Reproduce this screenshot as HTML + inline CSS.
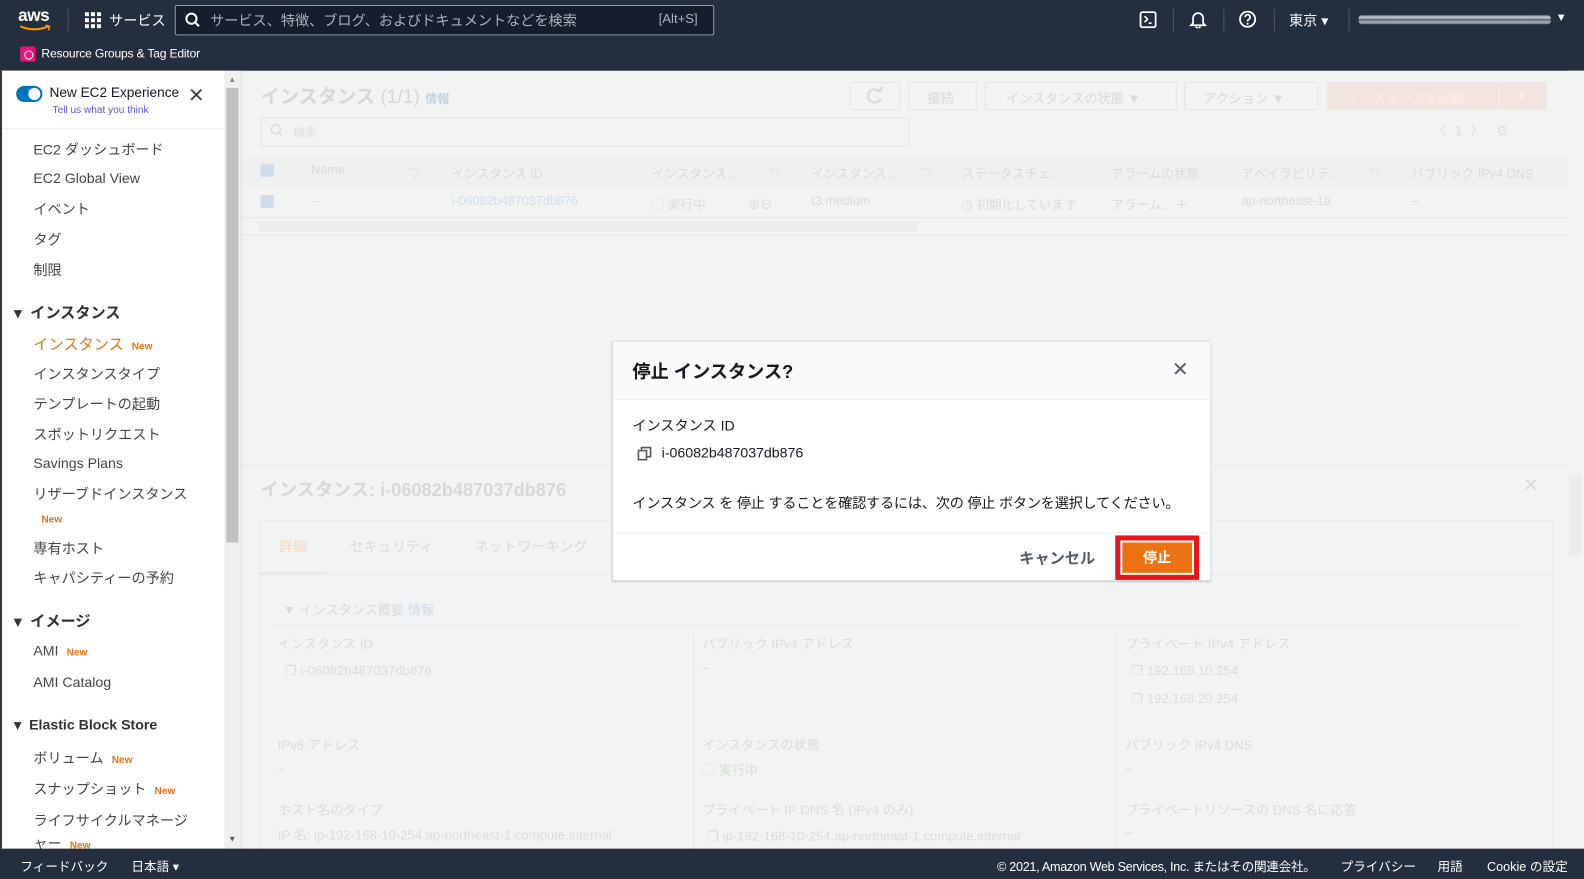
<!DOCTYPE html>
<html><head><meta charset="utf-8"><style>
html,body{margin:0;padding:0;width:1584px;height:879px;overflow:hidden;background:#f2f3f3}
#w{position:absolute;left:0;top:0;width:1568px;height:870px;transform:scale(1.0102,1.0103);transform-origin:0 0;font-family:"Liberation Sans","Noto Sans CJK JP",sans-serif;}
.a{position:absolute;white-space:nowrap}
.top{position:absolute;left:0;top:0;width:1568px;height:70px;background:#232f3e;color:#fff}
.side{position:absolute;left:0;top:70px;width:222px;height:770px;background:#fff;border-left:2px solid #333;box-sizing:border-box;font-size:14px;color:#444}
.side .a{color:#444}
.new{color:#ec7211;font-size:10px;font-weight:bold;margin-left:8px}
.foot{position:absolute;left:0;top:840px;width:1568px;height:30px;background:#232f3e;color:#fff;font-size:12.5px}
.fb{border:1px solid #e3e6e6;background:#f2f3f3;position:absolute;border-radius:2px}
.h{font-size:12.5px;color:#d8dbdc;top:161px}
.r{font-size:12.5px;color:#d8dbdc;top:192px}
.dlg{position:absolute;left:606px;top:337px;width:593px;height:238px;background:#fff;box-shadow:0 1px 2px rgba(0,0,0,.25);border:1px solid #ddd;box-sizing:border-box}
</style></head><body><div id="w">
<div class="top">
 <div class="a" style="left:18px;top:6px;font-size:17px;font-weight:bold;letter-spacing:-.5px">aws</div>
 <svg class="a" style="left:18px;top:24px" width="34" height="8"><path d="M2 2 Q16 8 30 2" stroke="#f90" stroke-width="2" fill="none"/><path d="M27 1 L31 2 L30 6" stroke="#f90" stroke-width="1.5" fill="none"/></svg>
 <div class="a" style="left:67px;top:9px;width:1px;height:22px;background:#555"></div>
 <svg class="a" style="left:84px;top:12px" width="16" height="16" fill="#fff"><rect x="0" y="0" width="4" height="4"/><rect x="6" y="0" width="4" height="4"/><rect x="12" y="0" width="4" height="4"/><rect x="0" y="6" width="4" height="4"/><rect x="6" y="6" width="4" height="4"/><rect x="12" y="6" width="4" height="4"/><rect x="0" y="12" width="4" height="4"/><rect x="6" y="12" width="4" height="4"/><rect x="12" y="12" width="4" height="4"/></svg>
 <div class="a" style="left:108px;top:10px;font-size:14px">サービス</div>
 <div class="a" style="left:173px;top:5px;width:532px;height:28px;border:1px solid #8d99a8;border-radius:2px;background:#161e2d"></div>
 <svg class="a" style="left:183px;top:12px" width="16" height="16"><circle cx="6.5" cy="6.5" r="5" stroke="#fff" stroke-width="2" fill="none"/><path d="M10 10 L14 14" stroke="#fff" stroke-width="2"/></svg>
 <div class="a" style="left:208px;top:10px;font-size:14px;color:#aab3bd">サービス、特徴、ブログ、およびドキュメントなどを検索</div>
 <div class="a" style="left:652px;top:11px;font-size:13px;color:#aab3bd">[Alt+S]</div>
 <svg class="a" style="left:1128px;top:11px" width="17" height="17"><rect x="1" y="1" width="15" height="15" rx="2" stroke="#fff" stroke-width="1.8" fill="none"/><path d="M5 5 L8 8 L5 11 M9 12 H12" stroke="#fff" stroke-width="1.6" fill="none"/></svg>
 <div class="a" style="left:1161px;top:9px;width:1px;height:22px;background:#555"></div>
 <svg class="a" style="left:1177px;top:10px" width="18" height="18"><path d="M4 13 V8 a5 5 0 0 1 10 0 V13 L16 15 H2 Z" stroke="#fff" stroke-width="1.7" fill="none"/><path d="M7 16 a2 2 0 0 0 4 0" stroke="#fff" stroke-width="1.6" fill="none"/></svg>
 <div class="a" style="left:1211px;top:9px;width:1px;height:22px;background:#555"></div>
 <svg class="a" style="left:1226px;top:10px" width="18" height="18"><circle cx="9" cy="9" r="7.5" stroke="#fff" stroke-width="1.8" fill="none"/><path d="M6.5 7 a2.5 2.5 0 1 1 3.5 2.3 c-1 .5 -1 1 -1 2" stroke="#fff" stroke-width="1.7" fill="none"/><circle cx="9" cy="13.5" r="1" fill="#fff"/></svg>
 <div class="a" style="left:1261px;top:9px;width:1px;height:22px;background:#555"></div>
 <div class="a" style="left:1276px;top:10px;font-size:14px">東京 ▾</div>
 <div class="a" style="left:1335px;top:9px;width:1px;height:22px;background:#555"></div>
 <div class="a" style="left:1345px;top:15px;width:190px;height:9px;background:linear-gradient(#6b7583,#cfd4d9,#5b6573,#aab2bb,#6b7583);border-radius:3px"></div>
 <div class="a" style="left:1540px;top:12px;font-size:11px">▼</div>
 <div class="a" style="left:20px;top:46px;width:15px;height:15px;background:#e7157b;border-radius:2px"></div>
 <div class="a" style="left:24px;top:50px;width:7px;height:7px;border:1px solid #fff;border-radius:50%"></div>
 <div class="a" style="left:41px;top:46px;font-size:12px;letter-spacing:-.2px">Resource Groups &amp; Tag Editor</div>
</div>

<div class="side">
 <div class="a" style="left:14px;top:15px;width:26px;height:16px;border-radius:8px;background:#0073bb"></div>
 <div class="a" style="left:26px;top:17px;width:12px;height:12px;border-radius:50%;background:#fff"></div>
 <div class="a" style="left:47px;top:14px;font-size:13.5px;color:#16191f">New EC2 Experience</div>
 <div class="a" style="left:50px;top:34px;font-size:10px;color:#5a54d1">Tell us what you think</div>
 <div class="a" style="left:184px;top:12px;font-size:20px;color:#444">✕</div>
 <div class="a" style="left:0;top:57px;width:222px;height:1px;background:#eaeded"></div>
 <div class="a" style="left:31px;top:68px">EC2 ダッシュボード</div>
 <div class="a" style="left:31px;top:98px">EC2 Global View</div>
 <div class="a" style="left:31px;top:127px">イベント</div>
 <div class="a" style="left:31px;top:157px">タグ</div>
 <div class="a" style="left:31px;top:187px">制限</div>
 <div class="a" style="left:12px;top:229px;font-size:15px;font-weight:bold;color:#333">▾ &nbsp;インスタンス</div>
 <div class="a" style="left:31px;top:260px;color:#ec7211;font-size:15px">インスタンス<span class="new">New</span></div>
 <div class="a" style="left:31px;top:290px">インスタンスタイプ</div>
 <div class="a" style="left:31px;top:320px">テンプレートの起動</div>
 <div class="a" style="left:31px;top:350px">スポットリクエスト</div>
 <div class="a" style="left:31px;top:380px">Savings Plans</div>
 <div class="a" style="left:31px;top:409px">リザーブドインスタンス</div>
 <div class="a" style="left:31px;top:434px"><span class="new" style="margin-left:8px">New</span></div>
 <div class="a" style="left:31px;top:463px">専有ホスト</div>
 <div class="a" style="left:31px;top:492px">キャパシティーの予約</div>
 <div class="a" style="left:12px;top:534px;font-size:15px;font-weight:bold;color:#333">▾ &nbsp;イメージ</div>
 <div class="a" style="left:31px;top:566px">AMI<span class="new">New</span></div>
 <div class="a" style="left:31px;top:597px">AMI Catalog</div>
 <div class="a" style="left:12px;top:639px;font-size:14px;font-weight:bold;color:#333">▾ &nbsp;Elastic Block Store</div>
 <div class="a" style="left:31px;top:670px">ボリューム<span class="new">New</span></div>
 <div class="a" style="left:31px;top:701px">スナップショット<span class="new">New</span></div>
 <div class="a" style="left:31px;top:732px">ライフサイクルマネージ</div>
 <div class="a" style="left:31px;top:755px">ャー<span class="new">New</span></div>
</div>
<div class="a" style="left:222px;top:70px;width:16px;height:770px;background:#f0f0f0"></div>
<div class="a" style="left:224px;top:87px;width:12px;height:450px;background:#c1c1c1"></div>
<div class="a" style="left:226px;top:74px;font-size:8px;color:#888">▲</div>
<div class="a" style="left:226px;top:826px;font-size:8px;color:#555">▼</div>
<div class="a" style="left:238px;top:70px;width:2px;height:770px;background:#e4e6e6"></div>

<!-- faded main -->
<div class="a" style="left:258px;top:81px;font-size:19px;color:#d5d9da;font-weight:bold">インスタンス <span style="font-weight:normal">(1/1)</span> <span style="font-size:12px;color:#c3d3e0">情報</span></div>
<div class="fb" style="left:841px;top:81px;width:48px;height:26px"></div>
<svg class="a" style="left:857px;top:86px" width="18" height="18"><path d="M14 5 A6.5 6.5 0 1 0 15 11" stroke="#d6dada" stroke-width="2" fill="none"/><path d="M10 4 H15 V0" stroke="#d6dada" stroke-width="2" fill="none"/></svg>
<div class="fb" style="left:899px;top:81px;width:66px;height:26px"></div>
<div class="fb" style="left:975px;top:81px;width:188px;height:26px"></div>
<div class="fb" style="left:1172px;top:81px;width:131px;height:26px"></div>
<div class="a" style="left:1313px;top:81px;width:218px;height:28px;background:#f1e6df"></div>
<div class="a" style="left:918px;top:87px;font-size:13px;color:#d6dada">接続</div>
<div class="a" style="left:996px;top:87px;font-size:13px;color:#d6dada">インスタンスの状態 ▼</div>
<div class="a" style="left:1191px;top:87px;font-size:13px;color:#d6dada">アクション ▼</div>
<div class="a" style="left:1333px;top:87px;font-size:13px;color:#f6efe9">インスタンスを起動</div>
<div class="a" style="left:1483px;top:81px;width:1px;height:28px;background:#f6efe9"></div>
<div class="a" style="left:1500px;top:87px;font-size:13px;color:#f6efe9">▼</div>
<div class="fb" style="left:258px;top:116px;width:640px;height:27px"></div>
<svg class="a" style="left:267px;top:122px" width="14" height="14"><circle cx="6" cy="6" r="4.5" stroke="#dcdfe0" stroke-width="1.6" fill="none"/><path d="M9 9 L13 13" stroke="#dcdfe0" stroke-width="1.6"/></svg>
<div class="a" style="left:290px;top:122px;font-size:12px;color:#dcdfe0">検索</div>
<div class="a" style="left:1418px;top:119px;font-size:14px;color:#dcdfe0">〈 &nbsp;1 &nbsp;〉 &nbsp; ⚙</div>
<div class="a" style="left:240px;top:155px;width:1312px;height:30px;background:#eff1f1;border-bottom:1px solid #dbe6ea"></div>
<div class="a" style="left:240px;top:185px;width:1312px;height:30px;background:#f2f3f3;border-bottom:1px solid #dbe6ea"></div>
<div class="a" style="left:258px;top:162px;width:13px;height:13px;background:#cfdeea"></div>
<div class="a" style="left:258px;top:193px;width:13px;height:13px;background:#cfdeea"></div>
<div class="a h" style="left:308px">Name</div><div class="a h" style="left:404px">▽</div>
<div class="a h" style="left:447px">インスタンス ID</div>
<div class="a h" style="left:645px">インスタンス...</div><div class="a h" style="left:761px">▽</div>
<div class="a h" style="left:803px">インスタンス...</div><div class="a h" style="left:910px">▽</div>
<div class="a h" style="left:952px">ステータスチェ...</div>
<div class="a h" style="left:1100px">アラームの状態</div>
<div class="a h" style="left:1229px">アベイラビリテ...</div><div class="a h" style="left:1355px">▽</div>
<div class="a h" style="left:1397px">パブリック IPv4 DNS</div>
<div class="a r" style="left:308px">–</div>
<div class="a r" style="left:447px;color:#d3e0ea">i-06082b487037db876</div>
<div class="a r" style="left:645px">◯ 実行中</div>
<div class="a r" style="left:740px">⊕⊖</div>
<div class="a r" style="left:803px">t3.medium</div>
<div class="a r" style="left:952px">◷ 初期化しています</div>
<div class="a r" style="left:1100px">アラーム... ＋</div>
<div class="a r" style="left:1229px">ap-northeast-1a</div>
<div class="a r" style="left:1397px">–</div>
<div class="a" style="left:256px;top:219px;width:652px;height:10px;background:#ececec"></div>
<div class="a" style="left:240px;top:232px;width:1312px;height:1px;background:#e3e6e6"></div>
<div class="a" style="left:240px;top:460px;width:1312px;height:1px;background:#e6e8e8"></div>
<div class="a" style="left:258px;top:471px;font-size:18px;color:#d6d9da;font-weight:bold">インスタンス: i-06082b487037db876</div>
<div class="a" style="left:1508px;top:470px;font-size:18px;color:#d6d9da">✕</div>
<div class="a" style="left:256px;top:515px;width:1280px;height:325px;border:1px solid #e8eaea;border-bottom:none"></div>
<div class="a" style="left:276px;top:531px;font-size:14px;color:#f3d9c6">詳細</div>
<div class="a" style="left:256px;top:566px;width:68px;height:3px;background:#e8e9e9"></div>
<div class="a" style="left:346px;top:531px;font-size:14px;color:#d8dbdc">セキュリティ</div>
<div class="a" style="left:470px;top:531px;font-size:14px;color:#d8dbdc">ネットワーキング</div>
<div class="a" style="left:256px;top:568px;width:1280px;height:1px;background:#e8eaea"></div>
<div class="a" style="left:280px;top:593px;font-size:13px;color:#d8dbdc">▼ インスタンス概要 <span style="color:#cfdce6">情報</span></div>
<div class="a" style="left:270px;top:618px;width:1236px;height:1px;background:#e8eaea"></div>
<div class="a" style="left:686px;top:626px;width:1px;height:214px;background:#e8eaea"></div>
<div class="a" style="left:1105px;top:626px;width:1px;height:214px;background:#e8eaea"></div>
<div class="a" style="left:275px;top:627px;font-size:13px;color:#dadddd">インスタンス ID</div>
<div class="a" style="left:282px;top:656px;font-size:13px;color:#dadddd">❐ i-06082b487037db876</div>
<div class="a" style="left:695px;top:627px;font-size:13px;color:#dadddd">パブリック IPv4 アドレス</div>
<div class="a" style="left:695px;top:653px;font-size:13px;color:#dadddd">–</div>
<div class="a" style="left:1114px;top:627px;font-size:13px;color:#dadddd">プライベート IPv4 アドレス</div>
<div class="a" style="left:1120px;top:656px;font-size:13px;color:#dadddd">❐ 192.168.10.254</div>
<div class="a" style="left:1120px;top:684px;font-size:13px;color:#dadddd">❐ 192.168.20.254</div>
<div class="a" style="left:275px;top:727px;font-size:13px;color:#dadddd">IPv6 アドレス</div>
<div class="a" style="left:275px;top:753px;font-size:13px;color:#dadddd">–</div>
<div class="a" style="left:695px;top:727px;font-size:13px;color:#dadddd">インスタンスの状態</div>
<div class="a" style="left:695px;top:752px;font-size:13px;color:#d3e3d3">◯ 実行中</div>
<div class="a" style="left:1114px;top:727px;font-size:13px;color:#dadddd">パブリック IPv4 DNS</div>
<div class="a" style="left:1114px;top:753px;font-size:13px;color:#dadddd">–</div>
<div class="a" style="left:275px;top:791px;font-size:13px;color:#dadddd">ホスト名のタイプ</div>
<div class="a" style="left:275px;top:816px;font-size:13px;color:#dadddd">IP 名: ip-192-168-10-254.ap-northeast-1.compute.internal</div>
<div class="a" style="left:695px;top:791px;font-size:13px;color:#dadddd">プライベート IP DNS 名 (IPv4 のみ)</div>
<div class="a" style="left:700px;top:820px;font-size:13px;color:#dadddd">❐ ip-192-168-10-254.ap-northeast-1.compute.internal</div>
<div class="a" style="left:1114px;top:791px;font-size:13px;color:#dadddd">プライベートリソースの DNS 名に応答</div>
<div class="a" style="left:1114px;top:816px;font-size:13px;color:#dadddd">–</div>
<div class="a" style="left:1552px;top:70px;width:16px;height:770px;background:#f2f3f3"></div>
<div class="a" style="left:1553px;top:470px;width:13px;height:80px;background:#ececec"></div>

<!-- dialog -->
<div class="dlg">
 <div class="a" style="left:0;top:0;width:591px;height:57px;background:#fafafa;border-bottom:1px solid #eaeded"></div>
 <div class="a" style="left:19px;top:16px;font-size:18px;font-weight:bold;color:#16191f">停止 インスタンス?</div>
 <div class="a" style="left:553px;top:15px;font-size:20px;color:#545b64">✕</div>
 <div class="a" style="left:19px;top:73px;font-size:14px;color:#16191f">インスタンス ID</div>
 <svg class="a" style="left:24px;top:104px" width="14" height="14"><rect x="1" y="4" width="8" height="9" stroke="#545b64" stroke-width="1.6" fill="none"/><path d="M4 4 V1 H13 V10 H9" stroke="#545b64" stroke-width="1.6" fill="none"/></svg>
 <div class="a" style="left:48px;top:102px;font-size:14px;color:#16191f">i-06082b487037db876</div>
 <div class="a" style="left:19px;top:150px;font-size:14px;color:#16191f;letter-spacing:-.2px">インスタンス を 停止 することを確認するには、次の 停止 ボタンを選択してください。</div>
 <div class="a" style="left:0;top:189px;width:591px;height:1px;background:#eaeded"></div>
 <div class="a" style="left:402px;top:204px;font-size:15px;font-weight:bold;color:#545b64">キャンセル</div>
 <div class="a" style="left:497px;top:192px;width:83px;height:44px;background:#e8151b"></div>
 <div class="a" style="left:502px;top:197px;width:73px;height:34px;background:#fff"></div>
 <div class="a" style="left:504px;top:199px;width:69px;height:30px;background:#ec7211;color:#fff;font-weight:bold;font-size:14px;text-align:center;line-height:30px">停止</div>
</div>

<div class="foot">
 <div class="a" style="left:20px;top:7px">フィードバック</div>
 <div class="a" style="left:130px;top:7px">日本語 ▾</div>
 <div class="a" style="left:987px;top:7px;letter-spacing:-.3px">© 2021, Amazon Web Services, Inc. またはその関連会社。</div>
 <div class="a" style="left:1327px;top:7px">プライバシー</div>
 <div class="a" style="left:1423px;top:7px">用語</div>
 <div class="a" style="left:1472px;top:7px">Cookie の設定</div>
</div>
</div></body></html>
